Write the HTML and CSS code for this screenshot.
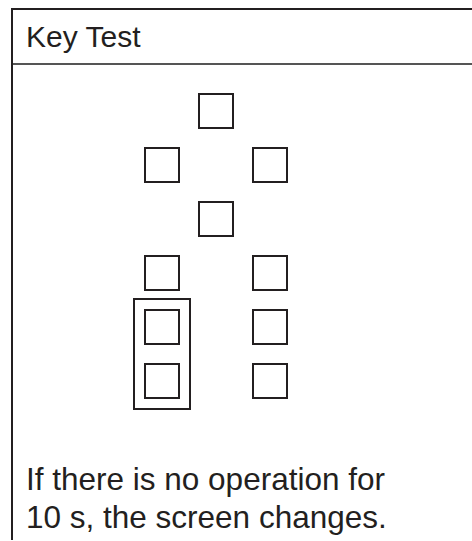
FILE: index.html
```html
<!DOCTYPE html>
<html lang="en">
<head>
  <meta charset="UTF-8">
  <title>Key Test</title>
  <link rel="stylesheet" href="styles.css">
</head>
<body>
<div class="panel">
  <div class="panel-title">Key Test</div>

  <div class="panel-body">
    <div class="keys">
      <div class="key c2 r1"></div>
      <div class="key c1 r2"></div>
      <div class="key c3 r2"></div>
      <div class="key c2 r3"></div>
      <div class="key c1 r4"></div>
      <div class="key c3 r4"></div>
      <div class="key-group">
        <div class="key"></div>
        <div class="key"></div>
      </div>
      <div class="key c3 r5"></div>
      <div class="key c3 r6"></div>
    </div>

    <p class="note">If there is no operation for<br>10 s, the screen changes.</p>
  </div>
</div>
</body>
</html>
```

FILE: styles.css
```css
body {
  margin: 0;
  background: #fff;
  color: #231f20;
  font-family: "Liberation Sans", Arial, sans-serif;
  overflow: hidden;
}
.panel {
  margin: 8px 0 0 11px;
  height: 530px;
  border-left: 2px solid #231f20;
  border-top: 2px solid #231f20;
}
.panel-title {
  height: 53px;
  line-height: 53px;
  padding-left: 13px;
  font-size: 30px;
  border-bottom: 2px solid #555;
}
.panel-body {
  padding: 28px 0 0 131px;
}
.keys {
  display: grid;
  grid-template-columns: repeat(3, 36px);
  grid-template-rows: repeat(6, 36px);
  gap: 18px;
}
.key {
  width: 36px;
  height: 36px;
  box-sizing: border-box;
  border: 2px solid #231f20;
}
.c1 { grid-column: 1; }
.c2 { grid-column: 2; }
.c3 { grid-column: 3; }
.r1 { grid-row: 1; }
.r2 { grid-row: 2; }
.r3 { grid-row: 3; }
.r4 { grid-row: 4; }
.r5 { grid-row: 5; }
.r6 { grid-row: 6; }
.key-group {
  grid-column: 1;
  grid-row: 5 / 7;
  margin: -11px;
  padding: 9px;
  border: 2px solid #231f20;
  display: flex;
  flex-direction: column;
  justify-content: space-between;
}
.note {
  margin: 61px 0 0 -118px;
  font-size: 31.5px;
  line-height: 38px;
}
```
